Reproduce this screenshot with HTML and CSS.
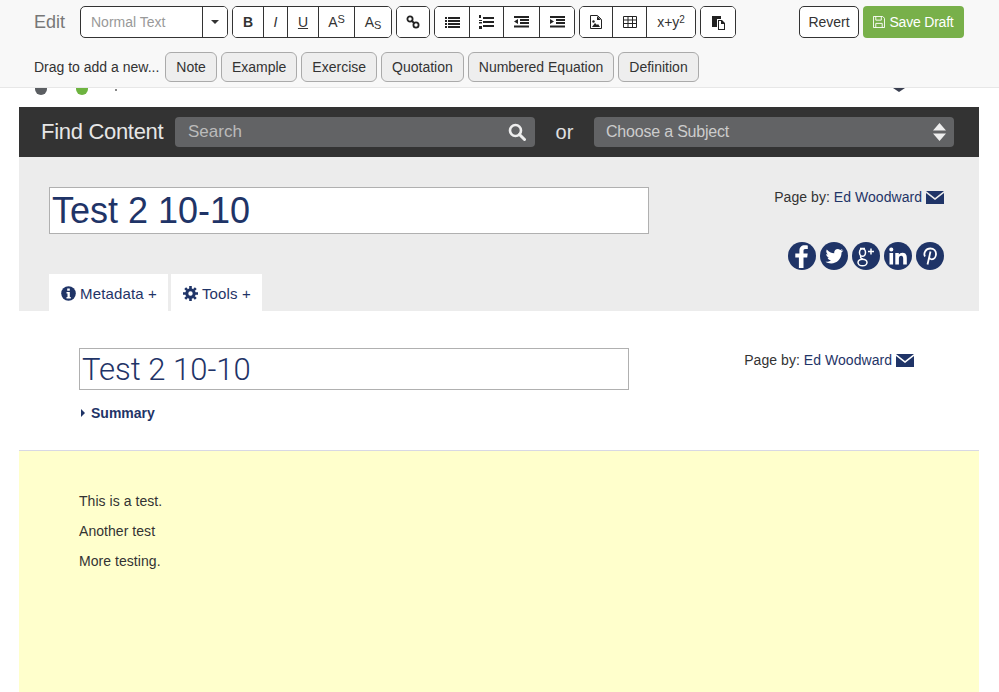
FILE: index.html
```html
<!DOCTYPE html>
<html lang="en">
<head>
    <meta charset="UTF-8">
    <meta name="viewport" content="width=device-width, initial-scale=1.0">
    <title>Test 2 10-10</title>
    <link rel="stylesheet" href="styles.css">
</head>
<body>
    <!-- Editor toolbar -->
    <div class="toolbar">
        <div class="toolbar-row">
            <span class="edit-label">Edit</span>
            <div class="btn-group format-select">
                <span class="format-name">Normal Text</span>
                <button class="btn caret-btn"><span class="caret"></span></button>
            </div>
            <div class="btn-group">
                <button class="btn w-30"><b>B</b></button>
                <button class="btn w-24"><i>I</i></button>
                <button class="btn w-31"><u>U</u></button>
                <button class="btn w-36">A<span class="up">S</span></button>
                <button class="btn w-37">A<span class="down">S</span></button>
            </div>
            <div class="btn-group">
                <button class="btn w-32">
                    <svg width="14" height="14" viewBox="0 0 14 14"><g fill="none" stroke="#222" stroke-width="1.800"><circle cx="4" cy="4" r="2.600"/><circle cx="10" cy="10" r="2.600"/><path d="M5.500 5.500l3 3"/></g></svg>
                </button>
            </div>
            <div class="btn-group">
                <button class="btn w-34">
                    <svg width="15" height="12" viewBox="0 0 15 12"><path fill="#222" d="M0 1h2v2H0zM3 1h12v2H3zM0 4h2v2H0zM3 4h12v2H3zM0 7h2v2H0zM3 7h12v2H3zM0 10h2v2H0zM3 10h12v2H3z"/></svg>
                </button>
                <button class="btn w-34">
                    <svg width="15" height="14" viewBox="0 0 15 14"><path fill="#222" d="M4 2h11v2H4zM4 6h11v2H4zM4 10h11v2H4zM0 0h2v3H0zM0 5h3v1H0zM0 7h3v1.500H0zM0 11h3v3H0z"/></svg>
                </button>
                <button class="btn w-36">
                    <svg width="15" height="12" viewBox="0 0 15 12"><path fill="#222" d="M0 0h15v2H0zM6 3h9v2H6zM6 6h9v2H6zM0 9.500h15v2H0zM4 3v5L0 5.500z"/></svg>
                </button>
                <button class="btn w-35">
                    <svg width="15" height="12" viewBox="0 0 15 12"><path fill="#222" d="M0 0h15v2H0zM6 3h9v2H6zM6 6h9v2H6zM0 9.500h15v2H0zM0 3v5l4-2.500z"/></svg>
                </button>
            </div>
            <div class="btn-group">
                <button class="btn w-32">
                    <svg width="12" height="14" viewBox="0 0 12 14"><path fill="none" stroke="#222" d="M.5.500h7l4 4v9H.5z"/><path fill="#222" d="M7 1v4h4zM2 12l3-4 2 2 1-1 2 3z"/><circle cx="3.500" cy="6.500" r="1.200" fill="#222"/></svg>
                </button>
                <button class="btn w-34">
                    <svg width="14" height="12" viewBox="0 0 14 12"><path fill="none" stroke="#222" d="M.5.500h13v11H.5zM.5 4h13M.5 7.500h13M5 .5v11M9.500.5v11"/></svg>
                </button>
                <button class="btn w-49">x+y<span class="up small">2</span></button>
            </div>
            <div class="btn-group">
                <button class="btn w-34">
                    <svg width="14" height="15" viewBox="0 0 14 15"><path fill="#222" d="M1 1h9v3H6v8H1z"/><path fill="#222" d="M7 5h4l3 3v7H7zM8 6v8h5V9h-3V6z"/></svg>
                </button>
            </div>
            <div class="draft-actions">
                <button class="btn revert-btn">Revert</button>
                <button class="btn save-btn">
                    <svg width="12" height="12" viewBox="0 0 13 13"><path fill="none" stroke="#fff" d="M.5.500h10l2 2v10H.5z"/><path fill="none" stroke="#fff" d="M3 .5v4h6v-4M3 12.500V8h7v4.500"/></svg>
                    Save Draft
                </button>
            </div>
        </div>
        <div class="toolbar-row drag-row">
            <span class="drag-label">Drag to add a new...</span>
            <button class="drag-btn">Note</button>
            <button class="drag-btn">Example</button>
            <button class="drag-btn">Exercise</button>
            <button class="drag-btn">Quotation</button>
            <button class="drag-btn">Numbered Equation</button>
            <button class="drag-btn">Definition</button>
        </div>
    </div>

    <!-- What shows of the site header under the toolbar -->
    <div class="site-strip">
        <span class="dot dot-grey"></span>
        <span class="dot dot-green"></span>
        <span class="strip-tick"></span>
        <span class="strip-badge"></span>
    </div>

    <div class="page">
        <div class="search-bar">
            <span class="find-label">Find Content</span>
            <div class="search-box">
                <span>Search</span>
                <svg width="18" height="18" viewBox="0 0 18 18"><circle cx="7.500" cy="7.500" r="5.500" fill="none" stroke="#eee" stroke-width="2.600"/><path d="M11.500 11.500l5 5" stroke="#eee" stroke-width="3" stroke-linecap="round"/></svg>
            </div>
            <span class="or-label">or</span>
            <div class="search-box subject-box">
                <span>Choose a Subject</span>
                <svg width="13" height="18" viewBox="0 0 13 18"><path fill="#eee" d="M6.500 0l6.500 7.500H0zM0 10.500h13L6.500 18z"/></svg>
            </div>
        </div>

        <div class="page-head">
            <div class="head-main">
                <div class="title-input">Test 2 10-10</div>
                <div class="head-side">
                    <div class="page-by">
                        Page by: <a href="#">Ed Woodward</a>
                        <svg class="mail" width="18" height="13" viewBox="0 0 18 13"><path fill="#1f3467" d="M0 0h18L9 7zM0 2l9 7 9-7v11H0z"/></svg>
                    </div>
                    <div class="social">
                        <svg width="28" height="28" viewBox="0 0 28 28"><circle cx="14" cy="14" r="14" fill="#1f3467"/><path fill="#fff" d="M15.500 26v-10.500h3.700l.5-4h-4.200V9c0-1.200.4-2 2-2h2.300V3.500c-.5 0-1.800-.2-3.200-.2-3.100 0-5.200 1.900-5.200 5.400v2.800H7.300v4h3.600V26z"/></svg>
                        <svg width="28" height="28" viewBox="0 0 28 28"><circle cx="14" cy="14" r="14" fill="#1f3467"/><path fill="#fff" d="M23 8.500c-.7.300-1.400.5-2.100.6.800-.5 1.300-1.200 1.600-2-.7.400-1.500.7-2.300.9-1.500-1.500-3.600-1.500-5 0-.9.900-1.200 2.200-.9 3.300-3-.1-5.700-1.600-7.500-3.800-1 1.700-.5 3.800 1.100 4.900-.6 0-1.200-.2-1.700-.4 0 1.700 1.200 3.200 2.900 3.600-.5.100-1.100.2-1.600.1.500 1.400 1.800 2.400 3.400 2.500-1.500 1.200-3.400 1.800-5.400 1.500 1.600 1.100 3.600 1.700 5.600 1.700 6.800 0 10.600-5.700 10.400-10.900.7-.5 1.400-1.200 1.900-2z"/></svg>
                        <svg width="28" height="28" viewBox="0 0 28 28"><circle cx="14" cy="14" r="14" fill="#1f3467"/><g fill="none" stroke="#fff" stroke-width="1.500"><ellipse cx="10.500" cy="10.500" rx="3" ry="3.800"/><ellipse cx="10.500" cy="20.500" rx="4.500" ry="3.300"/><path d="M9 14c-1 1.500 0 2.500 2 3.500M13 6.500H8M19 6.500v6M16 9.500h6"/></g></svg>
                        <svg width="28" height="28" viewBox="0 0 28 28"><circle cx="14" cy="14" r="14" fill="#1f3467"/><path fill="#fff" d="M5.500 11h3.600v11.500H5.500zM7.300 5.500a2 2 0 1 1 0 4.100 2 2 0 0 1 0-4.100zM11.300 11h3.500v1.600c.7-1.100 1.900-1.900 3.600-1.900 3.200 0 4.400 2 4.400 5.300v6.500h-3.600v-5.800c0-1.500-.4-2.900-2-2.900s-2.300 1.300-2.300 2.900v5.800h-3.600z"/></svg>
                        <svg width="28" height="28" viewBox="0 0 28 28"><circle cx="14" cy="14" r="14" fill="#1f3467"/><path fill="none" stroke="#fff" stroke-width="1.800" d="M9 14.500c-1.800-3.300.7-8 5.300-8 3.800 0 5.700 2.600 5.700 5.300 0 3.200-1.800 5.500-4.200 5.500-1.300 0-2.200-.7-2.500-1.500M14.500 9.500l-3 13"/></svg>
                    </div>
                </div>
            </div>
            <div class="tabs">
                <div class="tab">
                    <svg width="15" height="15" viewBox="0 0 15 15"><circle cx="7.500" cy="7.500" r="7.300" fill="#1f3467"/><path fill="#fff" d="M6.200 2.500h2.600v2.200H6.200zM5.500 6h3.300v5h1v1.500H5.500V11h1V7.500h-1z"/></svg>
                    Metadata +
                </div>
                <div class="tab">
                    <svg width="15" height="15" viewBox="0 0 15 15"><circle cx="7.500" cy="7.500" r="3.700" fill="none" stroke="#1f3467" stroke-width="3"/><path fill="none" stroke="#1f3467" stroke-width="2.600" d="M7.500 0v3M7.500 12v3M0 7.500h3M12 7.500h3M2.200 2.200l2 2M10.800 10.800l2 2M2.200 12.800l2-2M10.800 4.200l2-2"/></svg>
                    Tools +
                </div>
            </div>
        </div>

        <div class="content-head">
            <div class="head-main">
                <div class="title-input title-small">Test 2 10-10</div>
                <div class="page-by page-by-content">
                    Page by: <a href="#">Ed Woodward</a>
                    <svg class="mail" width="18" height="13" viewBox="0 0 18 13"><path fill="#1f3467" d="M0 0h18L9 7zM0 2l9 7 9-7v11H0z"/></svg>
                </div>
            </div>
            <div class="summary"><span class="summary-arrow"></span>Summary</div>
        </div>

        <div class="content-body">
            <p>This is a test.</p>
            <p>Another test</p>
            <p>More testing.</p>
        </div>
    </div>
</body>
</html>
```
FILE: styles.css
```css
* {
    box-sizing: border-box;
}

body {
    font-family: "Liberation Sans", Arial, sans-serif;
    margin: 0;
    padding: 0;
    height: 692px;
    display: flex;
    flex-direction: column;
    overflow: hidden;
    background-color: #fff;
}

button {
    font-family: inherit;
}

/* Toolbar */
.toolbar {
    background-color: #f8f8f8;
    border-bottom: 1px solid #e7e7e7;
    height: 88px;
    padding: 6px 35px 0 34px;
    flex: none;
}

.toolbar-row {
    display: flex;
    align-items: center;
    height: 32px;
}

.edit-label {
    color: #777;
    font-size: 18px;
    width: 46px;
}

.btn-group {
    display: flex;
    height: 32px;
    margin-right: 4px;
    border: 1px solid #333;
    border-radius: 5px;
    background-color: #fff;
    overflow: hidden;
}

.btn {
    display: flex;
    align-items: center;
    justify-content: center;
    height: 100%;
    padding: 0;
    border: 0;
    border-left: 1px solid #333;
    background-color: #fff;
    color: #333;
    font-size: 14px;
}

.btn:first-child {
    border-left: 0;
}

.w-24 { width: 24px; }
.w-30 { width: 30px; }
.w-31 { width: 31px; }
.w-32 { width: 32px; }
.w-34 { width: 34px; }
.w-35 { width: 35px; }
.w-36 { width: 36px; }
.w-37 { width: 37px; }
.w-49 { width: 49px; }

.up {
    font-size: 11px;
    margin-top: -6px;
}

.up.small {
    font-size: 10px;
}

.down {
    font-size: 11px;
    margin-top: 6px;
}

.format-select {
    width: 148px;
}

.format-name {
    flex: 1;
    padding-left: 10px;
    color: #999;
    font-size: 14px;
    line-height: 30px;
}

.caret-btn {
    width: 25px;
    border-left: 1px solid #333;
}

.caret {
    border-top: 4px solid #333;
    border-left: 4px solid transparent;
    border-right: 4px solid transparent;
}

.draft-actions {
    display: flex;
    gap: 4px;
    margin-left: auto;
    height: 32px;
}

.draft-actions .revert-btn {
    width: 60px;
    border: 1px solid #333;
    border-radius: 5px;
}

.save-btn {
    gap: 4px;
    width: 101px;
    border: 0;
    border-radius: 4px;
    background-color: #78b04a;
    color: #fff;
    letter-spacing: -0.2px;
}

.drag-row {
    height: 30px;
    margin-top: 14px;
}

.drag-label {
    color: #333;
    font-size: 14px;
    margin-right: 6px;
}

.drag-btn {
    height: 30px;
    margin-right: 4px;
    padding: 0 10px;
    border: 1px solid #aaa;
    border-radius: 6px;
    background-color: #eee;
    color: #333;
    font-size: 14px;
}

/* Strip under the toolbar */
.site-strip {
    display: flex;
    height: 19px;
    padding-left: 35px;
    overflow: hidden;
    flex: none;
}

.dot {
    width: 12px;
    height: 12px;
    margin-top: -5px;
    border-radius: 50%;
}

.dot-grey {
    background-color: #5b5e62;
}

.dot-green {
    margin-left: 29px;
    background-color: #6db33f;
}

.strip-tick {
    width: 2px;
    height: 2px;
    margin: 1px 0 0 27px;
    background-color: #888;
}

.strip-badge {
    width: 12px;
    height: 4px;
    margin-left: 776px;
    background-color: #3a3f50;
    clip-path: polygon(0 0, 100% 0, 50% 100%);
}

/* Page */
.page {
    display: flex;
    flex-direction: column;
    flex: 1;
    width: 960px;
    margin-left: 19px;
}

.search-bar {
    display: flex;
    align-items: center;
    height: 50px;
    padding-left: 22px;
    background-color: #333;
    flex: none;
}

.find-label {
    width: 134px;
    color: #e6e6e6;
    font-size: 22px;
    letter-spacing: -0.3px;
}

.search-box {
    display: flex;
    align-items: center;
    justify-content: space-between;
    width: 360px;
    height: 30px;
    padding: 0 9px 0 13px;
    border-radius: 4px;
    background-color: #626365;
    color: #bbb;
    font-size: 17px;
}

.or-label {
    width: 59px;
    color: #e0e0e0;
    font-size: 20px;
    text-align: center;
}

.subject-box {
    padding: 0 8px 0 12px;
    color: #ccc;
    font-size: 16px;
    letter-spacing: -0.2px;
}

.page-head {
    height: 154px;
    padding: 30px 35px 0 30px;
    background-color: #ececec;
    flex: none;
}

.head-main {
    display: flex;
    justify-content: space-between;
}

.head-side {
    display: flex;
    flex-direction: column;
    align-items: flex-end;
}

.title-input {
    width: 600px;
    height: 47px;
    padding-left: 2px;
    border: 1px solid #b0b0b0;
    background-color: #fff;
    color: #1f3467;
    font-size: 36px;
    line-height: 45px;
}

.page-by {
    color: #333;
    font-size: 14px;
    line-height: 20px;
    letter-spacing: 0.05px;
    text-align: right;
}

.page-by a {
    color: #1f3467;
    text-decoration: none;
}

.page-by-content {
    margin-top: 2px;
}

.mail {
    vertical-align: -2px;
}

.social {
    display: flex;
    gap: 4px;
    margin-top: 35px;
}

.tabs {
    display: flex;
    gap: 3px;
    margin-top: 4px;
}

.tab {
    display: flex;
    align-items: center;
    gap: 4px;
    height: 37px;
    padding: 2px 11px 0 12px;
    background-color: #fff;
    color: #1f3467;
    font-size: 15px;
    letter-spacing: 0.15px;
}

.content-head {
    height: 140px;
    padding: 37px 65px 0 60px;
    border-bottom: 1px solid #d8d8e4;
    flex: none;
}

.title-small {
    width: 550px;
    height: 42px;
    padding-left: 2px;
    font-family: Roboto, "Liberation Sans", sans-serif;
    font-size: 31px;
    font-weight: 300;
    line-height: 41px;
}

.summary {
    display: flex;
    align-items: center;
    margin: 15px 0 0 2px;
    color: #1f3467;
    font-size: 14px;
    font-weight: bold;
}

.summary-arrow {
    margin-right: 6px;
    border-left: 4px solid #1f3467;
    border-top: 4px solid transparent;
    border-bottom: 4px solid transparent;
}

.content-body {
    flex: 1;
    padding: 42px 60px 0;
    background-color: #ffc;
    color: #333;
    font-size: 14px;
    letter-spacing: 0.05px;
}

.content-body p {
    margin: 0 0 14px;
    line-height: 16px;
}
```
